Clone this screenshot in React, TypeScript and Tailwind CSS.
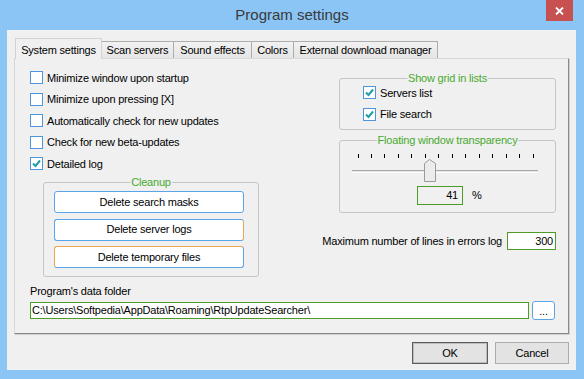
import React from 'react';

const font = { fontFamily: '"Liberation Sans", Arial, sans-serif' };

const Check: React.FC<{ checked?: boolean; label: string }> = ({ checked, label }) => (
  <div className="flex items-center h-[21.5px]">
    <span className="w-[13px] h-[13px] border border-[#4d96dc] bg-white flex items-center justify-center shrink-0">
      {checked && (
        <svg width="9" height="9" viewBox="0 0 9 9">
          <path d="M1 4.5 L3.5 7 L8 1.5" fill="none" stroke="#1f9ea6" strokeWidth="2" />
        </svg>
      )}
    </span>
    <span className="ml-[4px] whitespace-nowrap">{label}</span>
  </div>
);

const Group: React.FC<{ title: string; className?: string; children?: React.ReactNode }> = ({
  title,
  className = '',
  children,
}) => (
  <div className={`relative border border-[#c6c6c6] rounded-[3px] ${className}`}>
    <span className="absolute -top-[8px] left-1/2 -translate-x-1/2 px-[1px] bg-[#f0f0f0] text-[#47aa2e] whitespace-nowrap leading-[14px]">
      {title}
    </span>
    {children}
  </div>
);

const tabs = [
  { label: 'Scan servers', w: 'w-[72px]' },
  { label: 'Sound effects', w: 'w-[78px]' },
  { label: 'Colors', w: 'w-[42px]' },
  { label: 'External download manager', w: 'w-[144px]' },
];

const Slider: React.FC = () => {
  const ticks = Array.from({ length: 14 }, (_, i) => 5.5 + (i * 175) / 13);
  return (
    <svg width="187" height="28" viewBox="0 0 187 28" className="block">
      {ticks.map((x, i) => (
        <line key={i} x1={Math.round(x) + 0.5} y1="0" x2={Math.round(x) + 0.5} y2="4" stroke="#000" />
      ))}
      <line x1="0" y1="16.5" x2="186" y2="16.5" stroke="#a8a8a8" />
      <line x1="0" y1="17.5" x2="186" y2="17.5" stroke="#e6e6e6" />
      <line x1="0" y1="18.5" x2="186" y2="18.5" stroke="#ffffff" />
      <path d="M72.5 27.5 L72.5 9.5 L77.5 5.5 L83.5 9.5 L83.5 27.5 Z" fill="#ececec" stroke="#9a9a9a" />
    </svg>
  );
};

const App: React.FC = () => {
  return (
    <div
      style={font}
      className="w-[584px] h-[379px] bg-[#8bc5f5] flex flex-col text-[11px] tracking-[-0.2px] text-black overflow-hidden"
    >
      {/* title bar */}
      <div className="relative h-[30px] flex items-center justify-center">
        <span className="text-[15px] tracking-normal text-[#3a3a3a] pt-[1px]">Program settings</span>
        <div className="absolute top-0 right-[11px] w-[27px] h-[21px] bg-[#c75050] flex items-center justify-center">
          <svg width="9" height="8" viewBox="0 0 9 8">
            <path d="M1 0.5 L8 7.5 M8 0.5 L1 7.5" stroke="#fff" strokeWidth="1.8" />
          </svg>
        </div>
      </div>

      {/* client area */}
      <div className="ml-[7px] mr-[8px] h-[340px] bg-[#f0f0f0] pt-[8px] px-[7px] flex flex-col">
        {/* tabs */}
        <div className="flex items-end h-[20px] pl-[1px] relative z-10">
          <div className="w-[87px] h-[21px] -mb-px bg-[#f0f0f0] border border-b-0 border-[#d2d2d2] flex items-start justify-center pt-[3px]">
            System settings
          </div>
          {tabs.map((t) => (
            <div
              key={t.label}
              className={`${t.w} h-[17px] border border-l-0 border-b-0 border-[#adadad] bg-gradient-to-b from-[#f2f2f2] to-[#e5e5e5] flex items-center justify-center whitespace-nowrap`}
            >
              {t.label}
            </div>
          ))}
        </div>

        {/* panel */}
        <div className="h-[276px] border border-t-[#d9d9d9] border-l-[#d9d9d9] border-r-[#8a8a8a] border-b-[#8a8a8a] shadow-[1px_1px_0_#cfcfcf] pl-[15px] pr-[12px] flex flex-col">
          <div className="flex justify-between">
            {/* left column */}
            <div className="w-[229px] pt-[8px]">
              <Check label="Minimize window upon startup" />
              <Check label="Minimize upon pressing [X]" />
              <Check label="Automatically check for new updates" />
              <Check label="Check for new beta-updates" />
              <Check checked label="Detailed log" />
              <Group title="Cleanup" className="mt-[7.5px] ml-[13px] w-[216px] h-[95px]">
                <div className="pt-[8px] pl-[10px] flex flex-col gap-[5.5px]">
                  <button className="w-[190px] h-[22px] bg-white border border-[#5aa5e8] rounded-[3px]">
                    Delete search masks
                  </button>
                  <button className="w-[190px] h-[22px] bg-white border border-[#5aa5e8] border-r-[#e9a653] rounded-[3px]">
                    Delete server logs
                  </button>
                  <button className="w-[190px] h-[22px] bg-white border border-[#5aa5e8] border-t-[#e9a653] border-l-[#e9a653] rounded-[3px]">
                    Delete temporary files
                  </button>
                </div>
              </Group>
            </div>

            {/* right column */}
            <div className="w-[217px] pt-[19px] flex flex-col">
              <Group title="Show grid in lists" className="h-[52px]">
                <div className="pt-[3px] pl-[23px]">
                  <Check checked label="Servers list" />
                  <Check checked label="File search" />
                </div>
              </Group>
              <Group title="Floating window transparency" className="mt-[10px] h-[73px]">
                <div className="pt-[13px] pl-[12px]">
                  <Slider />
                  <div className="flex items-center mt-[4px] ml-[65px]">
                    <div className="w-[46px] h-[19px] bg-[#f0f0f0] border border-[#4e9c26] text-right pr-[4px] leading-[17px]">
                      41
                    </div>
                    <span className="ml-[9px]">%</span>
                  </div>
                </div>
              </Group>
              <div className="mt-[19px] flex justify-end items-center">
                <span className="whitespace-nowrap shrink-0">Maximum number of lines in errors log</span>
                <div className="ml-[5px] w-[49px] h-[18px] shrink-0 bg-white border border-[#4e9c26] text-right pr-[2px] leading-[16px]">
                  300
                </div>
              </div>
            </div>
          </div>

          {/* data folder */}
          <div className="mt-[7px] leading-[14px]">Program's data folder</div>
          <div className="mt-[3px] flex items-center gap-[3px]">
            <div className="w-[499px] h-[17px] bg-white border border-[#4e9c26] pl-[1px] leading-[15px] whitespace-nowrap overflow-hidden">
              C:\Users\Softpedia\AppData\Roaming\RtpUpdateSearcher\
            </div>
            <button className="w-[23px] h-[19px] bg-white border border-[#5aa5e8] rounded-[3px] leading-[14px]">
              ...
            </button>
          </div>
        </div>

        {/* dialog buttons */}
        <div className="mt-[8px] flex justify-end gap-[7px]">
          <button className="w-[76px] h-[22px] bg-[#e3e3e3] border border-[#5c5c5c] shadow-[inset_0_0_0_1px_#bdbdbd]">
            OK
          </button>
          <button className="w-[74px] h-[22px] bg-[#e3e3e3] border border-[#adadad]">Cancel</button>
        </div>
      </div>
    </div>
  );
};

export default App;
